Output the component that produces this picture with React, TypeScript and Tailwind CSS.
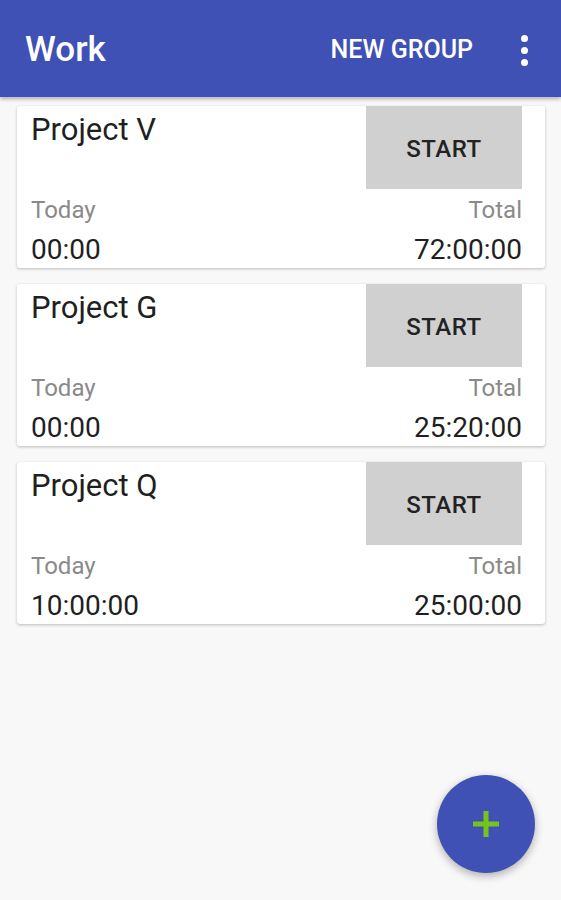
import React from "react";

const projects = [
  { name: "Project V", today: "00:00", total: "72:00:00" },
  { name: "Project G", today: "00:00", total: "25:20:00" },
  { name: "Project Q", today: "10:00:00", total: "25:00:00" },
];

function Card({ name, today, total }: { name: string; today: string; total: string }) {
  return (
    <div className="bg-white rounded-[3px] shadow-[0_1px_3px_rgba(0,0,0,0.25)] h-[162px] pl-[14px] pr-[23px] flex flex-col">
      <div className="flex justify-between h-[84px]">
        <div className="text-[31px] leading-none text-[#1f1f1f] pt-[8px]">{name}</div>
        <div className="w-[156px] h-[83px] bg-[#d0d0d0] flex items-center justify-center pt-[3px] text-[24px] font-medium tracking-[0.5px] text-[#222]">
          START
        </div>
      </div>
      <div className="flex justify-between text-[24px] leading-none text-[#8a8a8a] mt-[8px]">
        <span>Today</span>
        <span>Total</span>
      </div>
      <div className="flex justify-between text-[28px] leading-none text-[#1f1f1f] mt-[14px]">
        <span>{today}</span>
        <span>{total}</span>
      </div>
    </div>
  );
}

export default function App() {
  return (
    <div
      className="relative h-[900px] w-[561px] bg-[#f8f8f8] overflow-hidden"
      style={{ fontFamily: "Roboto, 'Liberation Sans', sans-serif" }}
    >
      <div className="h-[97px] bg-[#3f51b5] flex items-center pt-[3px] pl-[25px] pr-[33px] shadow-[0_2px_4px_rgba(0,0,0,0.3)] relative z-10">
        <div className="text-white text-[35px] font-medium flex-1">Work</div>
        <div className="text-white text-[25px] font-medium mr-[48px]">NEW GROUP</div>
        <div className="flex flex-col gap-[5px] items-center">
          <span className="block w-[7px] h-[7px] rounded-full bg-white" />
          <span className="block w-[7px] h-[7px] rounded-full bg-white" />
          <span className="block w-[7px] h-[7px] rounded-full bg-white" />
        </div>
      </div>
      <div className="flex flex-col gap-[16px] pt-[9px] pl-[17px] pr-[16px]">
        {projects.map((p) => (
          <Card key={p.name} {...p} />
        ))}
      </div>
      <div className="absolute left-[437px] top-[775px] w-[98px] h-[98px] rounded-full bg-[#3f51b5] shadow-[0_3px_8px_rgba(0,0,0,0.3)] flex items-center justify-center">
        <svg width="26" height="26" viewBox="0 0 26 26">
          <rect x="10.5" y="0" width="5" height="26" fill="#76c31a" />
          <rect x="0" y="10.5" width="26" height="5" fill="#76c31a" />
        </svg>
      </div>
    </div>
  );
}
